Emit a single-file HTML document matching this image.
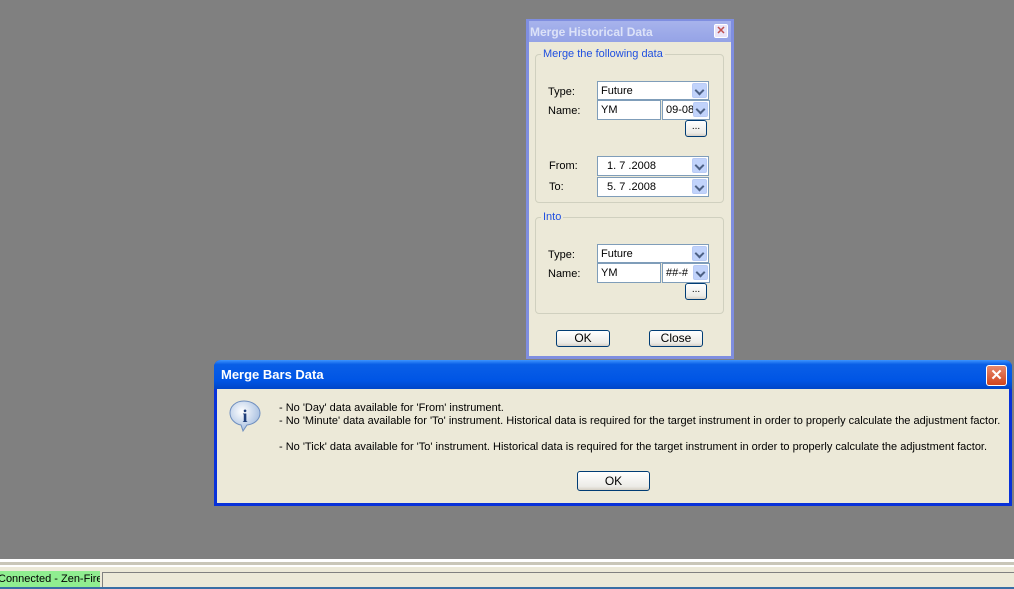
<!DOCTYPE html>
<html><head><style>
*{margin:0;padding:0;box-sizing:border-box}
body{width:1014px;height:589px;background:#808080;position:relative;overflow:hidden;font-family:"Liberation Sans",Arial,sans-serif;font-size:11px;color:#000}
.a{position:absolute}
.win1{left:526px;top:19px;width:208px;height:340px;background:#7F8EE0;}
.win1 .in{position:absolute;left:3px;top:22px;right:3px;bottom:3px;background:#ECE9D8}
.t1{left:529px;top:21px;width:202px;height:21px;background:linear-gradient(#A7B3EC,#95A3E6);color:#DCE2F8;font-weight:bold;font-size:12px;padding:4px 0 0 1px}
.grp{border:1px solid #D0D0BF;border-radius:4px}
.lg{background:#ECE9D8;color:#2050E0;padding:0 2px}
.box{background:#fff;border:1px solid #7F9DB9;padding:3px 3px 0;white-space:nowrap}
.dd{position:absolute;right:1px;top:1px;width:15px;height:15px;background:#C1D3FB;border:1px solid #B9CBF5;border-radius:2px}
.dd:after{content:"";position:absolute;left:3px;top:3px;width:5px;height:5px;border-right:2px solid #4D6185;border-bottom:2px solid #4D6185;transform:rotate(45deg)}
.btn{background:linear-gradient(#fff,#ECEBE6 80%,#D6D0C5);border:1px solid #003C74;border-radius:3px;text-align:center}
.win2{left:214px;top:360px;width:798px;height:146px;background:#0831D9;border-radius:7px 7px 0 0}
.win2 .tt{position:absolute;left:0;top:0;right:0;height:29px;border-radius:7px 7px 0 0;background:linear-gradient(#3D95FF,#0A5FE6 15%,#0055E5 70%,#0046C8);color:#fff;font-weight:bold;font-size:13px;padding:7px 0 0 7px}
.win2 .bd{position:absolute;left:3px;top:29px;right:3px;bottom:3px;background:#ECE9D8}
</style></head><body>
<div class="a win1"><div class="in"></div></div>
<div class="a t1">Merge Historical Data</div>
<div class="a" style="left:714px;top:24px;width:14px;height:14px;background:#E9E4F8;border:1px solid #fff;border-radius:2px;color:#C05050;font-size:11px;line-height:12px;text-align:center;font-weight:bold">✕</div>

<div class="a grp" style="left:535px;top:54px;width:189px;height:149px"></div>
<div class="a lg" style="left:541px;top:48px">Merge the following data</div>
<div class="a" style="left:548px;top:86px">Type:</div>
<div class="a" style="left:548px;top:105px">Name:</div>
<div class="a box" style="left:597px;top:81px;width:112px;height:19px">Future<div class="dd"></div></div>
<div class="a box" style="left:597px;top:100px;width:64px;height:20px">YM</div>
<div class="a box" style="left:662px;top:100px;width:48px;height:20px;overflow:hidden">09-08<div class="dd"></div></div>
<div class="a btn" style="left:685px;top:120px;width:22px;height:17px;font-size:10px">...</div>
<div class="a" style="left:549px;top:160px">From:</div>
<div class="a" style="left:549px;top:181px">To:</div>
<div class="a box" style="left:597px;top:156px;width:112px;height:20px;padding-left:9px">1. 7 .2008<div class="dd"></div></div>
<div class="a box" style="left:597px;top:177px;width:112px;height:20px;padding-left:9px">5. 7 .2008<div class="dd"></div></div>

<div class="a grp" style="left:535px;top:217px;width:189px;height:97px"></div>
<div class="a lg" style="left:541px;top:211px">Into</div>
<div class="a" style="left:548px;top:249px">Type:</div>
<div class="a" style="left:548px;top:268px">Name:</div>
<div class="a box" style="left:597px;top:244px;width:112px;height:19px">Future<div class="dd"></div></div>
<div class="a box" style="left:597px;top:263px;width:64px;height:20px">YM</div>
<div class="a box" style="left:662px;top:263px;width:48px;height:20px;overflow:hidden">##-#<div class="dd"></div></div>
<div class="a btn" style="left:685px;top:283px;width:22px;height:17px;font-size:10px">...</div>
<div class="a btn" style="left:556px;top:330px;width:54px;height:17px;line-height:15px;font-size:12px">OK</div>
<div class="a btn" style="left:649px;top:330px;width:54px;height:17px;line-height:15px;font-size:12px">Close</div>

<div class="a win2"><div class="tt">Merge Bars Data</div><div class="bd"></div></div>
<div class="a" style="left:986px;top:365px;width:21px;height:21px;background:linear-gradient(#E7896C,#D1441E);border:1px solid #fff;border-radius:3px;color:#fff;text-align:center;font-size:15px;line-height:19px;font-weight:bold">✕</div>
<svg class="a" style="left:228px;top:399px" width="34" height="34" viewBox="0 0 34 34">
<defs><radialGradient id="g" cx="0.4" cy="0.35" r="0.7"><stop offset="0" stop-color="#fff"/><stop offset="1" stop-color="#9DB8DD"/></radialGradient></defs>
<path d="M16 2C7 2 2 8 2 14c0 6 5 11 11 12l2 6 4-6c8-1 13-6 13-12C32 8 25 2 16 2z" fill="url(#g)" stroke="#6F8FBF"/>
<text x="17" y="23" font-family="Liberation Serif,serif" font-weight="bold" font-size="18" fill="#1F3E7A" text-anchor="middle">i</text></svg>
<div class="a" style="left:279px;top:402px;line-height:13px;white-space:pre">- No 'Day' data available for 'From' instrument.
- No 'Minute' data available for 'To' instrument. Historical data is required for the target instrument in order to properly calculate the adjustment factor.

- No 'Tick' data available for 'To' instrument. Historical data is required for the target instrument in order to properly calculate the adjustment factor.</div>
<div class="a btn" style="left:577px;top:471px;width:73px;height:20px;line-height:18px;font-size:12px">OK</div>

<div class="a" style="left:0;top:559px;width:1014px;height:3px;background:#fff"></div>
<div class="a" style="left:0;top:562px;width:1014px;height:3px;background:#C9C6B8"></div>
<div class="a" style="left:0;top:565px;width:1014px;height:2px;background:#fff"></div>
<div class="a" style="left:0;top:567px;width:1014px;height:20px;background:#ECE9D8"></div>
<div class="a" style="left:0;top:571px;width:100px;height:16px;background:#90EE90;padding:2px 0 0 0;white-space:nowrap;overflow:hidden;text-indent:-2px">Connected - Zen-Fire</div>
<div class="a" style="left:102px;top:572px;width:912px;height:15px;border-top:1px solid #808080;border-left:1px solid #808080"></div>
<div class="a" style="left:0;top:587px;width:1014px;height:2px;background:#3A6EA5"></div>
</body></html>
